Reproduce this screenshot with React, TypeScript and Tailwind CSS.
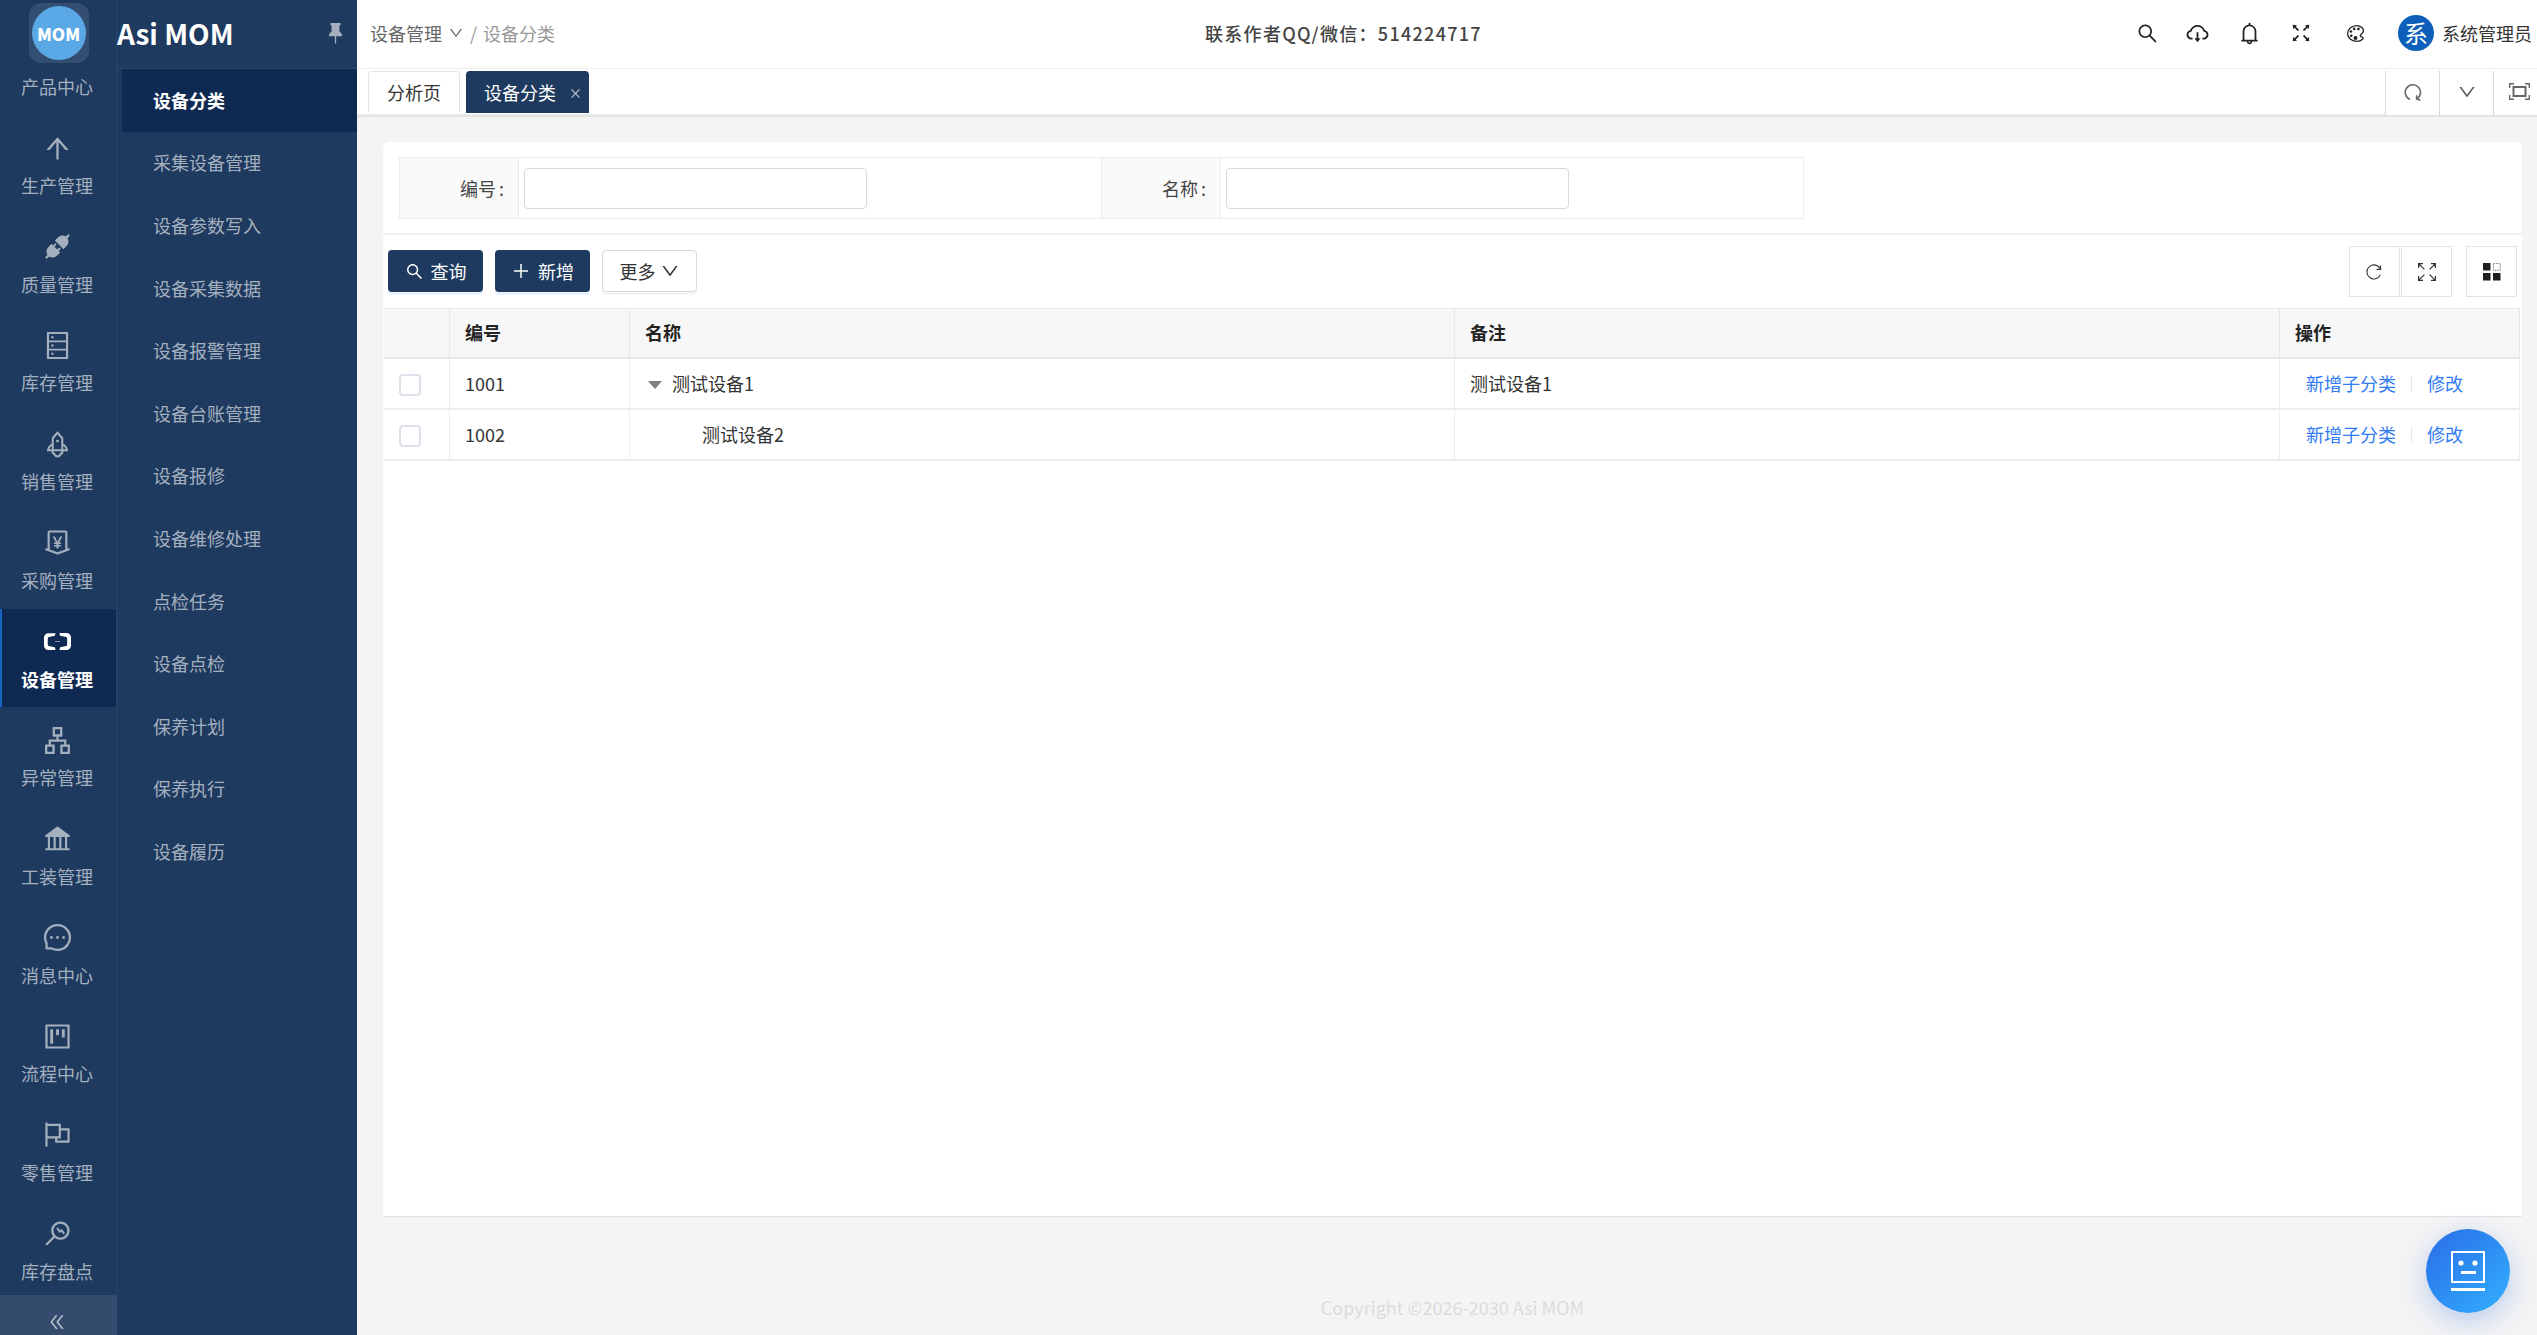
import type { ReactNode } from "react";
import { BsPinFill } from "react-icons/bs";
import { IoColorPaletteOutline } from "react-icons/io5";
import {
  AiFillApi,
  AiFillBank,
  AiOutlineAliyun,
  AiOutlineApartment,
  AiOutlineArrowUp,
  AiOutlineBell,
  AiOutlineClose,
  AiOutlineCloudDownload,
  AiOutlineDatabase,
  AiOutlineDoubleLeft,
  AiOutlineDown,
  AiOutlineFlag,
  AiOutlineFullscreen,
  AiOutlineMessage,
  AiOutlineMoneyCollect,
  AiOutlineMonitor,
  AiOutlinePlus,
  AiOutlineProject,
  AiOutlineRocket,
  AiOutlineSearch,
} from "react-icons/ai";

interface RailItem {
  label: string;
  icon: ReactNode;
  active?: boolean;
}

const railItems: RailItem[] = [
  { label: "生产管理", icon: <AiOutlineArrowUp /> },
  { label: "质量管理", icon: <AiFillApi /> },
  { label: "库存管理", icon: <AiOutlineDatabase /> },
  { label: "销售管理", icon: <AiOutlineRocket /> },
  { label: "采购管理", icon: <AiOutlineMoneyCollect /> },
  { label: "设备管理", icon: <AiOutlineAliyun />, active: true },
  { label: "异常管理", icon: <AiOutlineApartment /> },
  { label: "工装管理", icon: <AiFillBank /> },
  { label: "消息中心", icon: <AiOutlineMessage /> },
  { label: "流程中心", icon: <AiOutlineProject /> },
  { label: "零售管理", icon: <AiOutlineFlag /> },
  { label: "库存盘点", icon: <AiOutlineMonitor /> },
];

const menuItems = [
  "设备分类",
  "采集设备管理",
  "设备参数写入",
  "设备采集数据",
  "设备报警管理",
  "设备台账管理",
  "设备报修",
  "设备维修处理",
  "点检任务",
  "设备点检",
  "保养计划",
  "保养执行",
  "设备履历",
];

const rows = [
  { code: "1001", name: "测试设备1", note: "测试设备1", parent: true },
  { code: "1002", name: "测试设备2", note: "", parent: false },
];

function Sidebar() {
  return (
    <aside className="flex h-full w-[357px] shrink-0 bg-[#1e3a5f]">
      {/* Icon rail */}
      <div className="flex h-full w-[117px] shrink-0 flex-col">
        <div className="min-h-0 flex-1 overflow-hidden border-r border-[#2c4769]">
          <div className="flex h-[66px] justify-center pl-px pt-[3px]">
            <div className="flex size-[60px] items-center justify-center rounded-xl bg-[#344e72]">
              <div className="flex size-[54px] items-center justify-center rounded-full bg-[#5aa8e6] text-[17px] font-black leading-none text-white">
                MOM
              </div>
            </div>
          </div>
          <div className="mt-[8px] h-[41.1px] pr-[2px] text-center text-[18px] leading-6 text-[#a5b0bf]">
            产品中心
          </div>
          {railItems.map((item) => (
            <div
              key={item.label}
              className={`flex h-[98.7px] flex-col items-center pr-[2px] pt-[21px] ${
                item.active
                  ? "bg-[#0f2a52] font-bold text-white shadow-[inset_2px_0_0_#1565c0]"
                  : "text-[#a5b0bf]"
              }`}
            >
              <span className="flex h-6 items-center text-[31px]">{item.icon}</span>
              <span className="mt-[13px] text-[18px] leading-6">{item.label}</span>
            </div>
          ))}
        </div>
        <div className="flex h-10 shrink-0 items-center justify-center bg-[#344b6e] pr-[3px] pt-[14px] text-[20px] text-[#b5bfcd]">
          <AiOutlineDoubleLeft />
        </div>
      </div>

      {/* Sub menu */}
      <div className="flex h-full min-w-0 flex-1 flex-col">
        <div className="flex h-[69px] shrink-0 items-center justify-between border-b border-[#2c4769] pb-[2px] pr-[11px]">
          <span className="text-[28px] font-semibold leading-none text-white">Asi MOM</span>
          <BsPinFill className="text-[21px] text-[#a5b0bf]" />
        </div>
        <ul className="pl-[5px]">
          {menuItems.map((label, i) => (
            <li
              key={label}
              className={`flex h-[62.6px] items-center pl-[31px] text-[18px] ${
                i === 0 ? "bg-[#0f2a52] font-bold text-white" : "text-[#a5b0bf]"
              }`}
            >
              {label}
            </li>
          ))}
        </ul>
      </div>
    </aside>
  );
}

function Header() {
  return (
    <header className="flex h-[69px] shrink-0 items-center border-b border-[#eeeeee] bg-white pb-[2px] pl-[13px] pr-[5px] text-[18px]">
      <div className="flex w-[400px] items-center text-[#666666]">
        设备管理
        <AiOutlineDown className="ml-[6px] text-[16px]" />
        <span className="mx-[6px] text-[#999999]">/</span>
        <span className="text-[#999999]">设备分类</span>
      </div>
      <div className="ml-[435px] font-medium tracking-[1.3px] text-[#444444]">
        联系作者QQ/微信：514224717
      </div>
      <div className="ml-auto flex items-center text-[#222222]">
        <AiOutlineSearch className="mr-[26px] text-[23px]" />
        <AiOutlineCloudDownload className="mr-[27px] text-[25px]" />
        <AiOutlineBell className="mr-[27px] text-[25px]" />
        <AiOutlineFullscreen className="mr-[32px] text-[24px]" />
        <IoColorPaletteOutline className="mr-[32px] text-[21px]" />
        <span className="flex size-9 items-center justify-center rounded-full bg-[#0e5fba] text-[24px] leading-none text-white">
          系
        </span>
        <span className="ml-2 text-[#333333]">系统管理员</span>
      </div>
    </header>
  );
}

function TabRefreshIcon() {
  return (
    <svg viewBox="0 0 18 18" className="size-[18px]" fill="none" stroke="#666666" strokeWidth="1.6">
      <path d="M6 16.4A7.6 7.6 0 1 1 12.6 16" />
      <path d="M16.4 17.2 12.6 16V12.2" />
    </svg>
  );
}

function TabExpandIcon() {
  return (
    <svg viewBox="0 0 21 17" className="h-[17px] w-[21px]" fill="none" stroke="#666666">
      <path d="M.7 5V.7H5M16 .7h4.3V5M20.3 12v4.3H16M5 16.3H.7V12" strokeWidth="1.4" />
      <rect x="4.5" y="4" width="12" height="9" strokeWidth="2" />
    </svg>
  );
}

function TabBar() {
  return (
    <div className="flex h-[48px] shrink-0 border-b-2 border-[#e4e4e4] bg-white text-[18px]">
      <div className="flex flex-1 items-end gap-[6px] border-b border-[#eeeeee] pb-px pl-[11px]">
        <div className="flex h-[42px] w-[92px] items-center justify-center rounded-t border border-b-0 border-[#e4e4e4] text-[#333333]">
          分析页
        </div>
        <div className="flex h-[42px] w-[123px] items-center rounded-t bg-[#1e3a5f] pl-[18px] text-white">
          设备分类
          <AiOutlineClose className="ml-[13px] mt-[3px] text-[13px] text-[#c5ced9]" />
        </div>
      </div>
      <div className="mt-[2px] flex w-[54px] items-center justify-center border-l border-[#d9d9d9] pb-[3px]">
        <TabRefreshIcon />
      </div>
      <div className="mt-[2px] flex w-[54px] items-center justify-center border-l border-[#d9d9d9] pb-[3px] text-[#555555]">
        <AiOutlineDown className="text-[20px]" />
      </div>
      <div className="mt-[2px] flex w-[44px] items-center justify-start border-l border-[#d9d9d9] pb-[3px] pl-[15px]">
        <TabExpandIcon />
      </div>
    </div>
  );
}

function QueryField({ label }: { label: string }) {
  return (
    <div className="flex h-full w-[702px] shrink-0 border-r border-[#ececec] last:border-r-0">
      <div className="flex h-full w-[119px] shrink-0 items-center justify-end border-r border-[#ececec] bg-[#fafafa] pr-[14px] text-[#444444]">
        {label}
        <span className="ml-[3px]">:</span>
      </div>
      <div className="flex items-center pl-[5px]">
        <input className="h-[41px] w-[343px] rounded border border-[#d9d9d9] bg-white" />
      </div>
    </div>
  );
}

function ToolButton({ children, gapLeft }: { children: ReactNode; gapLeft?: boolean }) {
  return (
    <div
      className={`flex size-[51px] items-center justify-center border border-[#dfe3ec] text-[#222222] ${
        gapLeft ? "ml-[14px]" : "ml-px"
      }`}
    >
      {children}
    </div>
  );
}

function DataTable() {
  return (
    <table className="ml-px w-[2136px] table-fixed border-separate border-spacing-0 text-[18px] text-[#333333]">
      <colgroup>
        <col className="w-[66px]" />
        <col className="w-[180px]" />
        <col className="w-[825px]" />
        <col className="w-[825px]" />
        <col className="w-[240px]" />
      </colgroup>
      <thead>
        <tr className="h-[51px] bg-[#f7f7f7] text-left text-[#222222]">
          {["", "编号", "名称", "备注", "操作"].map((title) => (
            <th
              key={title}
              className="border-y border-r border-[#e8e8e8] border-b-2 pb-px pl-[15px] font-bold"
            >
              {title}
            </th>
          ))}
        </tr>
      </thead>
      <tbody>
        {rows.map((row) => (
          <tr key={row.code} className="h-[51px]">
            <td className="border-b-2 border-r border-[#eeeeee]">
              <div className="ml-[15px] mt-[3px] size-[22px] rounded-[4px] border-2 border-[#dde2ea] bg-white" />
            </td>
            <td className="border-b-2 border-r border-[#eeeeee] pl-[15px]">{row.code}</td>
            <td className="border-b-2 border-r border-[#eeeeee] pl-[15px]">
              {row.parent ? (
                <span className="flex items-center">
                  <svg viewBox="0 0 14 8" className="ml-[3px] mr-[10px] mt-[2px] h-2 w-[14px]">
                    <path d="M0 0h14L7 8z" fill="#7f7f7f" />
                  </svg>
                  {row.name}
                </span>
              ) : (
                <span className="pl-[57px]">{row.name}</span>
              )}
            </td>
            <td className="border-b-2 border-r border-[#eeeeee] pl-[15px]">{row.note}</td>
            <td className="border-b-2 border-r border-[#eeeeee] pl-[26px] text-[#2f7bf5]">
              <span className="flex items-center">
                新增子分类
                <span className="mx-[15px] h-[16px] w-px bg-[#e8e8e8]" />
                修改
              </span>
            </td>
          </tr>
        ))}
      </tbody>
    </table>
  );
}

function Fab() {
  return (
    <div className="absolute right-[27px] top-[1229px] flex size-[84px] items-center justify-center rounded-full bg-gradient-to-br from-[#2a6be6] to-[#36b0ff] shadow-[0_8px_28px_rgba(42,107,230,0.3)]">
      <svg viewBox="0 0 34 40" className="h-[40px] w-[34px]" fill="none">
        <rect x="1" y="1" width="32" height="30" stroke="white" strokeWidth="2" />
        <circle cx="10" cy="12" r="2.6" fill="white" />
        <circle cx="24" cy="12" r="2.6" fill="white" />
        <rect x="10" y="20" width="15" height="3" fill="white" />
        <rect y="37" width="34" height="3" fill="white" />
      </svg>
    </div>
  );
}

export default function App() {
  return (
    <div className="relative flex h-[1335px] w-[2537px] overflow-hidden bg-[#f4f4f4] font-['Noto_Sans_CJK_SC',sans-serif]">
      <Sidebar />
      <main className="flex min-w-0 flex-1 flex-col">
        <Header />
        <TabBar />
        <div className="flex min-h-0 flex-1 flex-col pl-[26px] pr-[15px] pt-[25px]">
          <section className="flex h-[1074px] flex-col rounded-t-md bg-white shadow-[0_1px_1px_rgba(0,0,30,0.08)]">
            {/* Query form */}
            <div className="h-[93px] shrink-0 border-b-2 border-[#f0f0f0] pl-[16px] pt-[15px] text-[18px]">
              <div className="flex h-[62px] w-[1405px] border border-[#ececec]">
                <QueryField label="编号" />
                <QueryField label="名称" />
              </div>
            </div>
            {/* Toolbar */}
            <div className="flex h-[73px] shrink-0 items-start pl-[5px] pr-[5px] text-[18px]">
              <div className="flex gap-3 pt-[15px]">
                <button className="flex h-[42px] w-[95px] items-center justify-center gap-[7px] rounded bg-[#1e3a5f] text-white shadow-[0_3px_0_#e6f2ff]">
                  <AiOutlineSearch className="text-[19px]" />
                  查询
                </button>
                <button className="flex h-[42px] w-[95px] items-center justify-center gap-[7px] rounded bg-[#1e3a5f] text-white shadow-[0_3px_0_#e6f2ff]">
                  <AiOutlinePlus className="text-[20px]" />
                  新增
                </button>
                <button className="flex h-[42px] w-[95px] items-center justify-center gap-[4px] rounded border border-[#d9d9d9] bg-white text-[#333333] shadow-[0_3px_0_#f5f5f5]">
                  更多
                  <AiOutlineDown className="text-[20px]" />
                </button>
              </div>
              <div className="ml-auto flex pt-[11px]">
                <ToolButton>
                  <svg viewBox="0 0 16 16" className="mr-[2px] size-4" fill="none" stroke="#333333" strokeWidth="1.1">
                    <path d="M14.4 5.2A7 7 0 1 0 14.4 10.6" />
                    <path d="M14.6 1.4V5.4H10.6" />
                  </svg>
                </ToolButton>
                <ToolButton>
                  <svg viewBox="0 0 18 18" className="size-[18px]" fill="none" stroke="#333333" strokeWidth="1.2">
                    <path d="M.6 5V.6H5M.6.6 6.4 6.4M13 .6h4.4V5M17.4.6 11.6 6.4M17.4 13v4.4H13M17.4 17.4 11.6 11.6M5 17.4H.6V13M.6 17.4 6.4 11.6" />
                  </svg>
                </ToolButton>
                <ToolButton gapLeft>
                  <svg viewBox="0 0 18 18" className="size-[18px]">
                    <rect width="7.5" height="7.5" fill="#1f1f1f" />
                    <rect y="10" width="7.5" height="7.5" fill="#1f1f1f" />
                    <rect x="10" y="10" width="7.5" height="7.5" fill="#1f1f1f" />
                    <rect x="10.4" y="0.4" width="6.8" height="6.8" fill="none" stroke="#555555" strokeWidth="0.8" strokeDasharray="1.5 1" />
                  </svg>
                </ToolButton>
              </div>
            </div>
            <DataTable />
          </section>
          <footer className="pt-[79px] text-center text-[18px] leading-6 text-[#dcdcdc]">
            Copyright ©2026-2030 Asi MOM
          </footer>
        </div>
      </main>
      <Fab />
    </div>
  );
}
